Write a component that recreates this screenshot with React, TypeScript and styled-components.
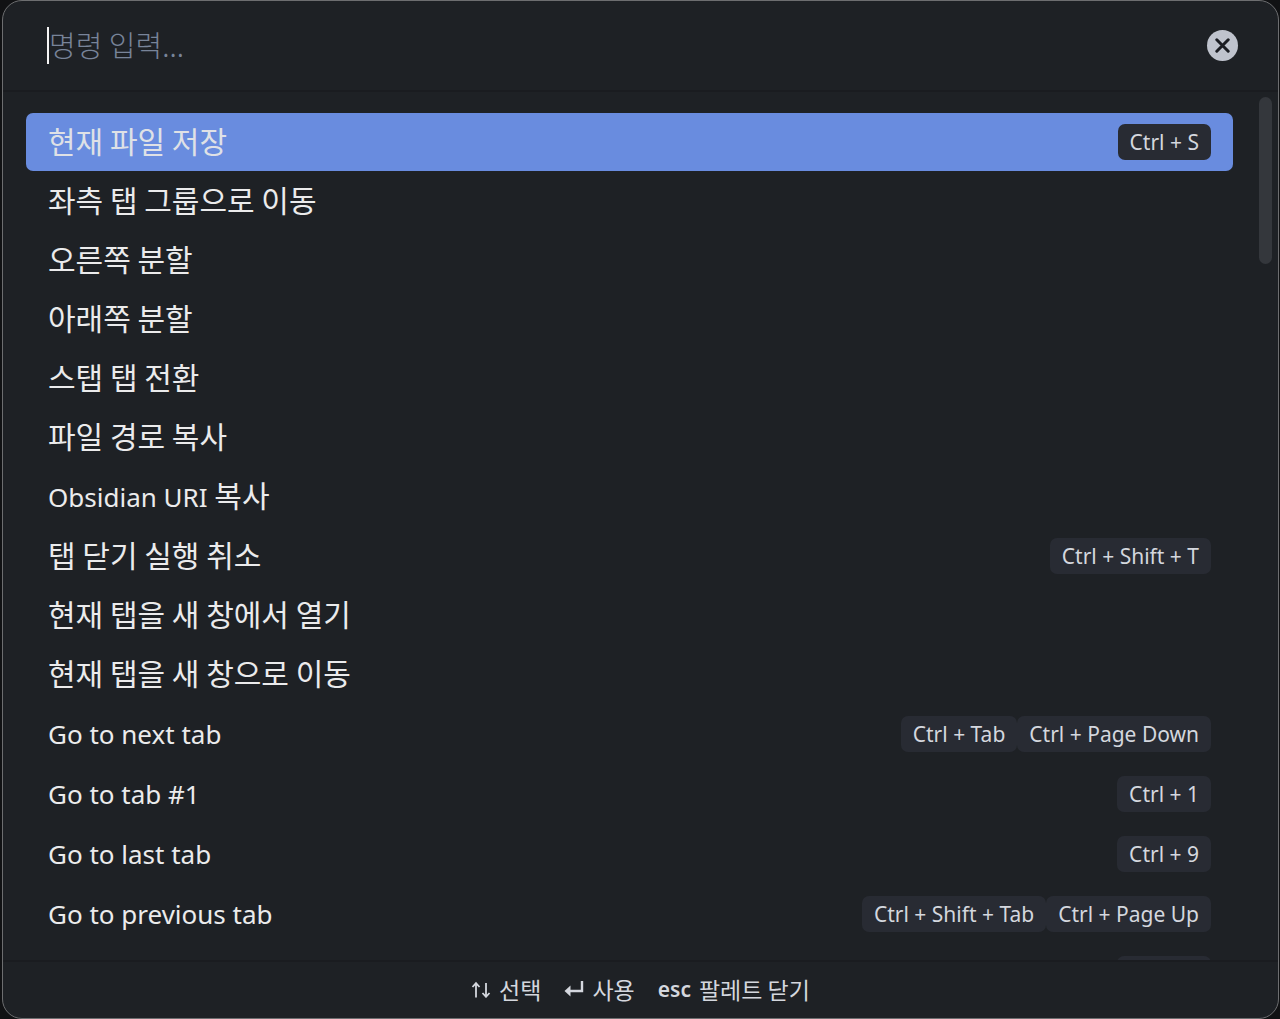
import React from "react";
import styled, { createGlobalStyle } from "styled-components";

const sans = `"Noto Sans", "Noto Sans CJK KR", sans-serif`;
const korean = `"Noto Sans CJK KR", "Noto Sans", sans-serif`;

const GlobalStyle = createGlobalStyle`
  *, *::before, *::after { box-sizing: border-box; }
  body { margin: 0; background: #111214; }
`;

const Palette = styled.main`
  display: flex;
  flex-direction: column;
  height: 100vh;
  margin: 0 1px 0 2px;
  overflow: hidden;
  border: 1px solid #6d6e70;
  border-radius: 20px;
  background: #1e2125;
  color: #ebebec;
  font-family: ${sans};
`;

const Header = styled.header`
  display: flex;
  align-items: center;
  height: 91px;
  flex: none;
  padding: 0 40px 0 44px;
  border-bottom: 2px solid #1a1c20;
`;

const CommandInput = styled.input`
  flex: 1;
  min-width: 0;
  height: 37px;
  padding: 0 0 4px;
  border: 0;
  border-left: 2px solid #f4f4f4;
  outline: none;
  background: transparent;
  color: inherit;
  caret-color: transparent;
  font-family: ${korean};
  font-size: 29px;
  font-weight: 300;
  &::placeholder { color: #788499; opacity: 1; }
`;

const ClearButton = styled.button`
  display: grid;
  place-items: center;
  width: 31px;
  height: 31px;
  padding: 0;
  border: 0;
  border-radius: 50%;
  background: #bfc3cd;
  color: #1a1c22;
`;

const Results = styled.div`
  display: flex;
  flex: 1;
  min-height: 0;
`;

const CommandList = styled.ul`
  display: flex;
  flex: 1;
  flex-direction: column;
  gap: 2px;
  margin: 0;
  padding: 21px 26px 0 23px;
  overflow-y: auto;
  scrollbar-width: none;
  list-style: none;
`;

const Command = styled.button<{ $selected?: boolean }>`
  display: flex;
  align-items: center;
  justify-content: space-between;
  width: 100%;
  min-height: 57px;
  padding: 11px 22px;
  border: 0;
  border-radius: 7px;
  background: ${(p) => (p.$selected ? "#698cdf" : "transparent")};
  color: ${(p) => (p.$selected ? "#dfe1e6" : "inherit")};
  font-family: ${sans};
  font-size: 26px;
  text-align: left;
`;

const Name = styled.span<{ $korean: boolean }>`
  display: block;
  height: 35px;
  line-height: ${(p) => (p.$korean ? "31px" : "35px")};
  white-space: pre;
`;

const Hangul = styled.span`
  font-family: ${korean};
  font-size: 30px;
`;

const Shortcuts = styled.span`
  display: flex;
`;

const Shortcut = styled.kbd`
  height: 36px;
  padding: 0 12px;
  border-radius: 7px;
  background: #282b33;
  color: #d4d7de;
  font-family: ${sans};
  font-size: 21px;
  line-height: 36px;
`;

const ScrollTrack = styled.div`
  width: 19px;
  padding: 5px 6px 5px 0;
`;

const ScrollThumb = styled.div`
  height: 167px;
  border-radius: 7px;
  background: #34373c;
`;

const Footer = styled.footer`
  display: flex;
  flex: none;
  align-items: center;
  justify-content: center;
  gap: 23px;
  height: 58px;
  padding-bottom: 2px;
  border-top: 2px solid #1a1c20;
  color: #d4d7de;
  font-family: ${korean};
  font-size: 23px;
  line-height: 32px;
`;

const Hint = styled.span`
  display: flex;
  align-items: center;
  gap: 8px;
`;

const Key = styled.strong`
  font-family: ${sans};
  font-size: 21px;
  font-weight: 600;
`;

type Entry = { name: string; keys?: string[] };

const commands: Entry[] = [
  { name: "현재 파일 저장", keys: ["Ctrl + S"] },
  { name: "좌측 탭 그룹으로 이동" },
  { name: "오른쪽 분할" },
  { name: "아래쪽 분할" },
  { name: "스탭 탭 전환" },
  { name: "파일 경로 복사" },
  { name: "Obsidian URI 복사" },
  { name: "탭 닫기 실행 취소", keys: ["Ctrl + Shift + T"] },
  { name: "현재 탭을 새 창에서 열기" },
  { name: "현재 탭을 새 창으로 이동" },
  { name: "Go to next tab", keys: ["Ctrl + Tab", "Ctrl + Page Down"] },
  { name: "Go to tab #1", keys: ["Ctrl + 1"] },
  { name: "Go to last tab", keys: ["Ctrl + 9"] },
  { name: "Go to previous tab", keys: ["Ctrl + Shift + Tab", "Ctrl + Page Up"] },
  { name: "새 탭", keys: ["Ctrl + T"] },
];

// Hangul runs are set larger than the Latin text beside them.
function CommandName({ text }: { text: string }) {
  const runs = text.split(/([가-힣][가-힣 ]*)/).filter(Boolean);
  return (
    <Name $korean={/[가-힣]/.test(text)}>
      {runs.map((run, i) =>
        /[가-힣]/.test(run) ? <Hangul key={i}>{run}</Hangul> : run
      )}
    </Name>
  );
}

export default function App() {
  return (
    <>
      <GlobalStyle />
      <Palette>
        <Header>
          <CommandInput aria-label="명령 입력" placeholder="명령 입력..." />
          <ClearButton type="button" aria-label="지우기">
            <svg width="15" height="15" viewBox="0 0 15 15" stroke="currentColor" strokeWidth="3" strokeLinecap="round">
              <path d="M1.8 1.8 13.2 13.2M13.2 1.8 1.8 13.2" />
            </svg>
          </ClearButton>
        </Header>
        <Results>
          <CommandList>
            {commands.map((command, i) => (
              <li key={command.name}>
                <Command type="button" $selected={i === 0}>
                  <CommandName text={command.name} />
                  {command.keys && (
                    <Shortcuts>
                      {command.keys.map((k) => (
                        <Shortcut key={k}>{k}</Shortcut>
                      ))}
                    </Shortcuts>
                  )}
                </Command>
              </li>
            ))}
          </CommandList>
          <ScrollTrack>
            <ScrollThumb />
          </ScrollTrack>
        </Results>
        <Footer>
          <Hint>
            <svg width="20" height="18" viewBox="0 0 20 18" fill="none" stroke="currentColor" strokeWidth="1.8">
              <path d="M5 17.500V4M1.500 7 5 3.200 8.500 7M15 3v13.500M11.500 13 15 16.800l3.500-3.800" />
            </svg>
            <span>선택</span>
          </Hint>
          <Hint>
            <svg width="20" height="18" viewBox="0 0 20 18" fill="none" stroke="currentColor" strokeWidth="2.400">
              <path d="M18 1v10H5" />
              <path d="M0.500 11 6.500 5.500v11z" fill="currentColor" stroke="none" />
            </svg>
            <span>사용</span>
          </Hint>
          <Hint>
            <Key>esc</Key>
            <span>팔레트 닫기</span>
          </Hint>
        </Footer>
      </Palette>
    </>
  );
}
